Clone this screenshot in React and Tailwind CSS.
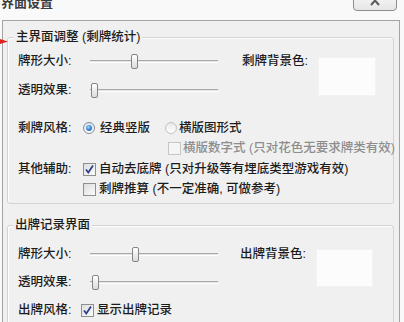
import React from 'react';

const FONT = "font-['Liberation_Sans','Noto_Sans_CJK_SC',sans-serif]";

const Slider = ({ pos }) => (
  <div className="relative h-[20px] w-[128px]">
    <div className="absolute left-0 right-0 top-[9px] h-[3px] border-t border-b border-t-[#a9a9a9] border-b-white bg-[#e4e4e4]" />
    <div
      className="absolute top-[3px] h-[15px] w-[7px] rounded-[2px] border border-[#858585] bg-gradient-to-b from-white to-[#dcdcdc]"
      style={{ left: pos }}
    />
  </div>
);

const Row = ({ label, children, labelWidth = 'w-[72px]' }) => (
  <div className="flex h-[20px] items-center whitespace-nowrap">
    <span className={`${labelWidth} shrink-0`}>{label}</span>
    {children}
  </div>
);

const Check = ({ checked, disabled }) => (
  <span
    className={`flex h-[13px] w-[13px] shrink-0 items-center justify-center border ${
      disabled
        ? 'border-[#c6c6c6] bg-[#f5f5f5]'
        : 'border-[#8e8f8f] bg-gradient-to-br from-[#dedede] to-[#fbfbfb]'
    }`}
  >
    {checked && (
      <svg width="11" height="11" viewBox="0 0 11 11">
        <path d="M2 5.5 L4.3 8.5 L9 1.5" fill="none" stroke="#2d3f8c" strokeWidth="1.8" />
      </svg>
    )}
  </span>
);

const Radio = ({ checked }) => (
  <span
    className={`flex h-[12px] w-[12px] shrink-0 items-center justify-center rounded-full border ${
      checked ? 'border-[#7d8a99] bg-gradient-to-b from-[#dfe6ee] to-white' : 'border-[#c2c2c2] bg-gradient-to-b from-[#e8e8e8] to-white'
    }`}
  >
    {checked && (
      <span className="h-[6px] w-[6px] rounded-full bg-[radial-gradient(circle_at_40%_35%,#9ad6ff,#1b5fb6_75%)]" />
    )}
  </span>
);

export default function App() {
  return (
    <div className={`h-[322px] w-[404px] overflow-hidden bg-[#f9f9f9] text-[12.5px] font-medium text-[#1c1c1c] ${FONT}`}>
      {/* title bar (cut off) */}
      <div className="flex h-[20px] items-start justify-between">
        <div className="-mt-[5px] pl-[1px] text-[13px] font-bold leading-[16px] text-[#3d3d3d]">界面设置</div>
        <div className="-mt-[6px] mr-[7px] flex h-[17px] w-[44px] items-start justify-center rounded-b-[4px] border border-[#8c8c8c] bg-gradient-to-b from-[#f6f6f6] to-[#e6e6e6] pt-[1px]">
          <svg width="12" height="10" viewBox="0 0 12 10">
            <path d="M2 0 L10 9 M10 0 L2 9" stroke="#5a5a5a" strokeWidth="2" fill="none" />
          </svg>
        </div>
      </div>

      {/* frame */}
      <div className="relative ml-[2px] h-[302px] w-[398px] border-x border-t border-[#a3a3a3] bg-[#f0f0f0] pl-[4px] pt-[16px]">
        <svg className="absolute -left-[3px] top-[17px]" width="8" height="7" viewBox="0 0 8 7">
          <path d="M0 1 L8 3.5 L0 6 Z" fill="#e0201c" />
        </svg>

        {/* group 1 */}
        <div className="h-[167px] w-[387px] rounded-[3px] border border-[#d3d3d3] shadow-[inset_1px_1px_0_#fff]">
          <div className="-mt-[9px] ml-[6px] w-fit bg-[#f0f0f0] px-[2px] leading-[17px]">主界面调整 (剩牌统计)</div>
          <div className="mt-[5px] flex pl-[10px]">
            <div className="flex flex-col gap-[9px]">
              <Row label="牌形大小:"><Slider pos={41} /></Row>
              <Row label="透明效果:"><Slider pos={1} /></Row>
            </div>
            <div className="ml-[24px] w-[76px] leading-[20px]">剩牌背景色:</div>
            <div className="mt-[6px] h-[39px] w-[58px] border border-[#f3f3f3] bg-[#fcfcfc]" />
          </div>
          <div className="mt-[18px] pl-[10px]">
            <Row label="剩牌风格:" labelWidth="w-[65px]">
              <Radio checked />
              <span className="ml-[5px]">经典竖版</span>
              <span className="ml-[15px]"><Radio /></span>
              <span className="ml-[2px]">横版图形式</span>
            </Row>
            <div className="flex h-[20px] items-center whitespace-nowrap pl-[150px] text-[#8d8d8d]">
              <Check disabled />
              <span className="ml-[2px]">横版数字式 (只对花色无要求牌类有效)</span>
            </div>
            <div className="mt-[1px]">
              <Row label="其他辅助:" labelWidth="w-[65px]">
                <Check checked />
                <span className="ml-[3px]">自动去底牌 (只对升级等有埋底类型游戏有效)</span>
              </Row>
            </div>
            <div className="flex h-[20px] items-center whitespace-nowrap pl-[65px]">
              <Check />
              <span className="ml-[3px]">剩牌推算 (不一定准确, 可做参考)</span>
            </div>
          </div>
        </div>

        {/* group 2 */}
        <div className="mt-[21px] h-[120px] w-[387px] rounded-[3px] border border-[#d3d3d3] shadow-[inset_1px_1px_0_#fff]">
          <div className="-mt-[9px] ml-[5px] w-fit bg-[#f0f0f0] px-[2px] leading-[17px]">出牌记录界面</div>
          <div className="mt-[10px] flex pl-[10px]">
            <div className="flex flex-col gap-[8px]">
              <Row label="牌形大小:"><Slider pos={42} /></Row>
              <Row label="透明效果:"><Slider pos={2} /></Row>
            </div>
            <div className="ml-[22px] w-[76px] leading-[20px]">出牌背景色:</div>
            <div className="mt-[5px] h-[38px] w-[57px] border border-[#f3f3f3] bg-[#fcfcfc]" />
          </div>
          <div className="mt-[8px] pl-[10px]">
            <Row label="出牌风格:" labelWidth="w-[63px]">
              <Check checked />
              <span className="ml-[3px]">显示出牌记录</span>
            </Row>
          </div>
        </div>
      </div>
    </div>
  );
}
